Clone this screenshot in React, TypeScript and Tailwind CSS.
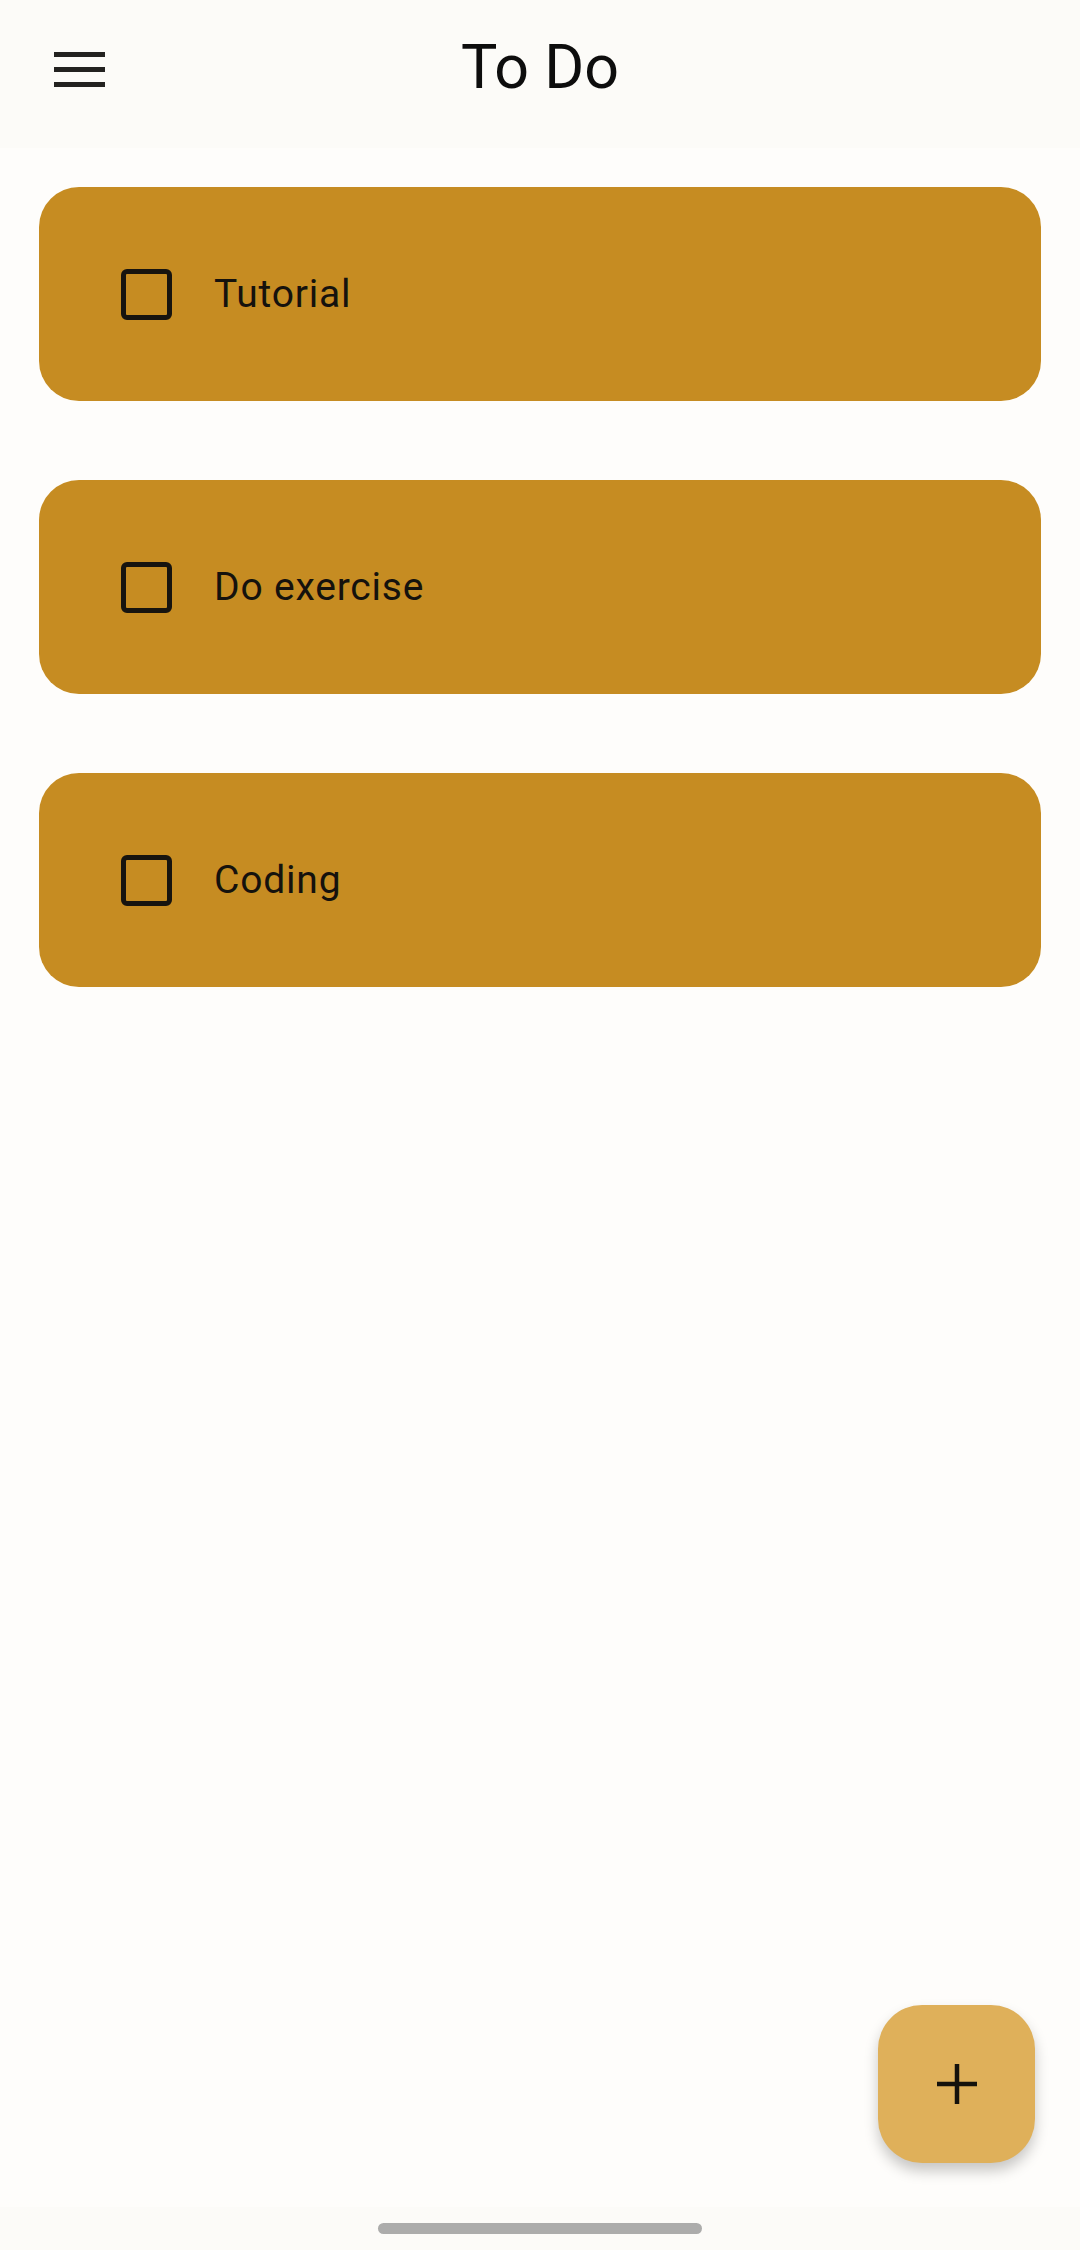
import React from 'react';

const todos = ['Tutorial', 'Do exercise', 'Coding'];

const TodoCard: React.FC<{ title: string }> = ({ title }) => {
  return (
    <div className="flex h-[214px] items-center rounded-[40px] bg-[#c68c22] pl-[82px]">
      <div className="h-[51px] w-[51px] rounded-[6px] border-[5.5px] border-[#17140f]" />
      <span className="ml-[42px] text-[39px] tracking-[0.8px] text-[#15120d]">{title}</span>
    </div>
  );
};

const App: React.FC = () => {
  return (
    <div
      className="relative flex min-h-[2250px] flex-col bg-[#fefdfb]"
      style={{ fontFamily: 'Roboto, "Liberation Sans", sans-serif' }}
    >
      <header className="relative flex h-[148px] items-center justify-center bg-[#fcfbf8]">
        <button className="absolute left-[54px] top-[52px] flex w-[51px] flex-col gap-[10px]">
          <span className="h-[5px] w-full bg-[#232220]" />
          <span className="h-[5px] w-full bg-[#232220]" />
          <span className="h-[5px] w-full bg-[#232220]" />
        </button>
        <h1 className="mt-[-14px] text-[61px] leading-none text-[#0d0d0d]">To Do</h1>
      </header>

      <main className="flex flex-1 flex-col gap-[79px] px-[39px] pt-[39px]">
        {todos.map((t) => (
          <TodoCard key={t} title={t} />
        ))}
      </main>

      <button className="absolute bottom-[87px] right-[45px] flex h-[158px] w-[157px] items-center justify-center rounded-[44px] bg-[#dfb05a] shadow-[0_8px_14px_rgba(0,0,0,0.22)]">
        <svg width="42" height="42" viewBox="0 0 42 42">
          <path d="M21 1v40M1 21h40" stroke="#15120c" strokeWidth="4.5" />
        </svg>
      </button>

      <div className="flex h-[43px] items-center justify-center bg-[#fcfbf8]">
        <div className="h-[11px] w-[324px] rounded-full bg-[#acacab]" />
      </div>
    </div>
  );
};

export default App;
